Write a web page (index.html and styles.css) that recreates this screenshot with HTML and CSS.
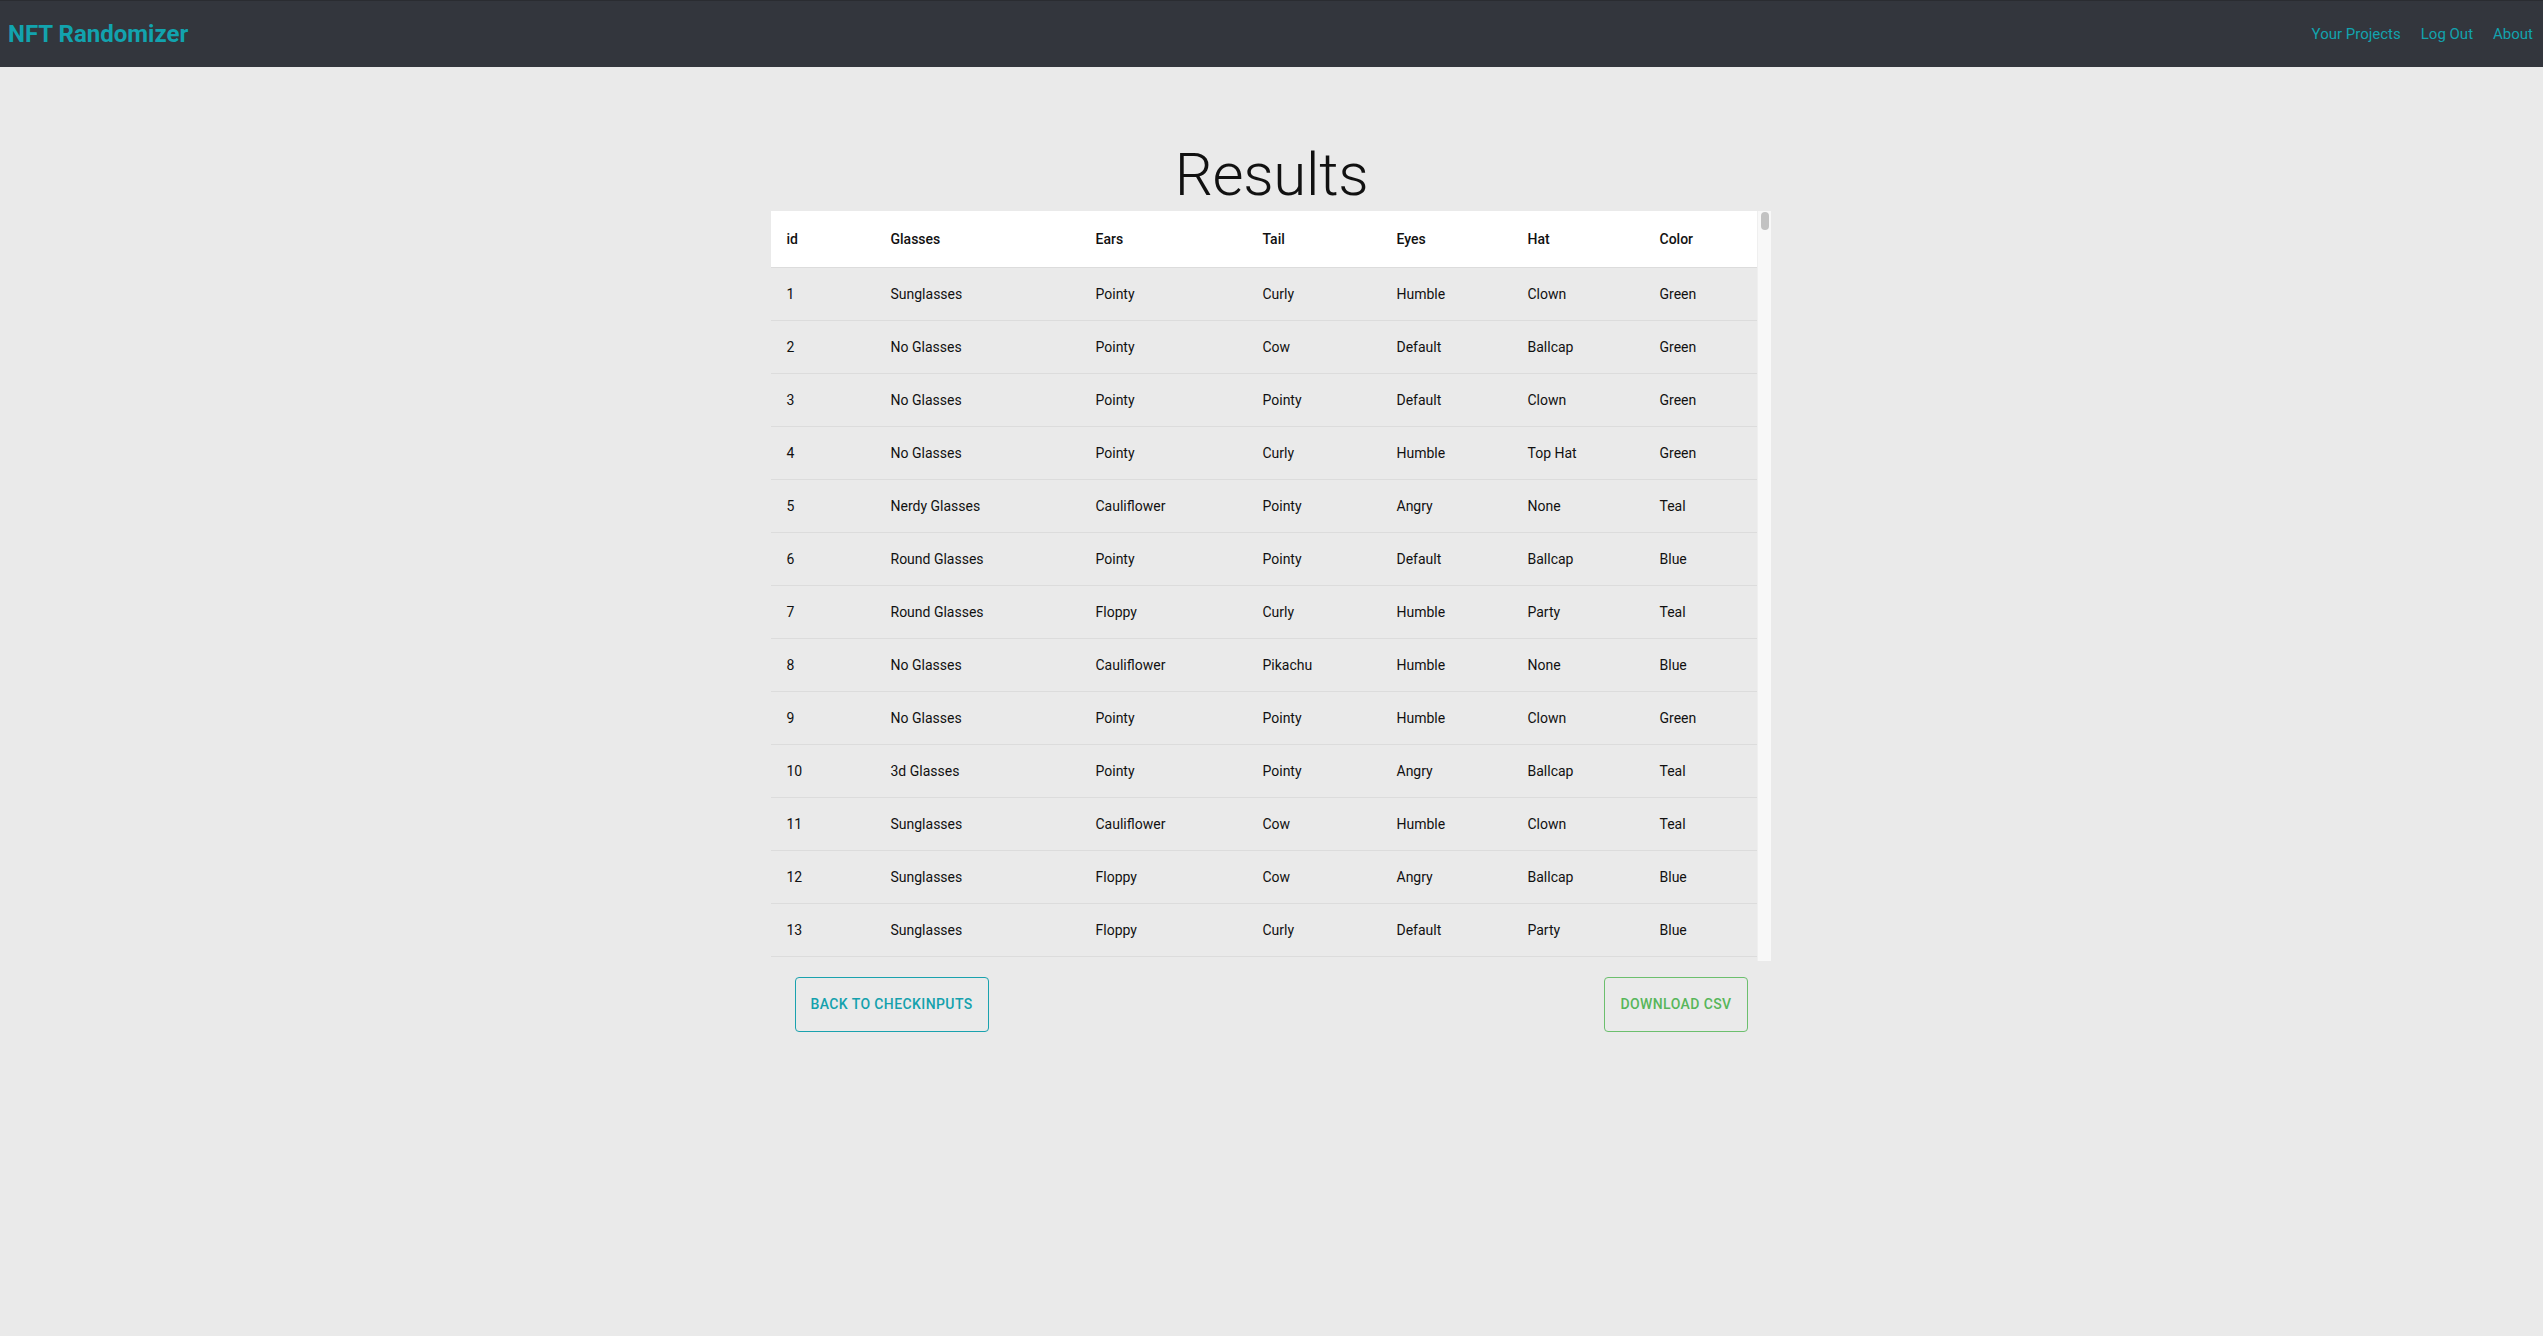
FILE: index.html
```html
<!DOCTYPE html>
<html lang="en">
<head>
<meta charset="utf-8">
<title>NFT Randomizer - Results</title>
<link rel="stylesheet" href="styles.css">
</head>
<body>
<header class="navbar">
  <a class="brand" href="#">NFT Randomizer</a>
  <nav class="nav-links">
    <a href="#">Your Projects</a>
    <a href="#">Log Out</a>
    <a href="#">About</a>
  </nav>
</header>
<main class="page">
  <h1 class="title">Results</h1>
  <section class="results">
    <div class="table-box">
      <div class="table-wrap">
        <table class="results-table">
          <colgroup>
            <col class="c-id"><col class="c-glasses"><col class="c-ears"><col class="c-tail"><col class="c-eyes"><col class="c-hat"><col class="c-color">
          </colgroup>
          <thead>
            <tr><th>id</th><th>Glasses</th><th>Ears</th><th>Tail</th><th>Eyes</th><th>Hat</th><th>Color</th></tr>
          </thead>
          <tbody>
            <tr><td>1</td><td>Sunglasses</td><td>Pointy</td><td>Curly</td><td>Humble</td><td>Clown</td><td>Green</td></tr>
            <tr><td>2</td><td>No Glasses</td><td>Pointy</td><td>Cow</td><td>Default</td><td>Ballcap</td><td>Green</td></tr>
            <tr><td>3</td><td>No Glasses</td><td>Pointy</td><td>Pointy</td><td>Default</td><td>Clown</td><td>Green</td></tr>
            <tr><td>4</td><td>No Glasses</td><td>Pointy</td><td>Curly</td><td>Humble</td><td>Top Hat</td><td>Green</td></tr>
            <tr><td>5</td><td>Nerdy Glasses</td><td>Cauliflower</td><td>Pointy</td><td>Angry</td><td>None</td><td>Teal</td></tr>
            <tr><td>6</td><td>Round Glasses</td><td>Pointy</td><td>Pointy</td><td>Default</td><td>Ballcap</td><td>Blue</td></tr>
            <tr><td>7</td><td>Round Glasses</td><td>Floppy</td><td>Curly</td><td>Humble</td><td>Party</td><td>Teal</td></tr>
            <tr><td>8</td><td>No Glasses</td><td>Cauliflower</td><td>Pikachu</td><td>Humble</td><td>None</td><td>Blue</td></tr>
            <tr><td>9</td><td>No Glasses</td><td>Pointy</td><td>Pointy</td><td>Humble</td><td>Clown</td><td>Green</td></tr>
            <tr><td>10</td><td>3d Glasses</td><td>Pointy</td><td>Pointy</td><td>Angry</td><td>Ballcap</td><td>Teal</td></tr>
            <tr><td>11</td><td>Sunglasses</td><td>Cauliflower</td><td>Cow</td><td>Humble</td><td>Clown</td><td>Teal</td></tr>
            <tr><td>12</td><td>Sunglasses</td><td>Floppy</td><td>Cow</td><td>Angry</td><td>Ballcap</td><td>Blue</td></tr>
            <tr><td>13</td><td>Sunglasses</td><td>Floppy</td><td>Curly</td><td>Default</td><td>Party</td><td>Blue</td></tr>
          </tbody>
        </table>
      </div>
      <div class="scrollbar" aria-hidden="true"><div class="scroll-thumb"></div></div>
    </div>
    <div class="actions">
      <button class="btn btn-teal" type="button">Back to Checkinputs</button>
      <button class="btn btn-green" type="button">Download CSV</button>
    </div>
  </section>
</main>
</body>
</html>
```

FILE: styles.css
```css
* { box-sizing: border-box; }

html, body {
  margin: 0;
  padding: 0;
}

body {
  min-height: 100vh;
  background: #eaeaea;
  font-family: Roboto, "Liberation Sans", Arial, sans-serif;
  color: #111;
}

.navbar {
  height: 67px;
  background: #33363d;
  border-top: 1px solid #2a2c31;
  display: flex;
  align-items: center;
  justify-content: space-between;
  padding: 0 10px 0 8px;
}

.brand {
  color: #12a3ae;
  font-weight: 700;
  font-size: 24px;
  text-decoration: none;
  line-height: 1;
}

.nav-links {
  display: flex;
  gap: 20px;
}

.nav-links a {
  color: #12a3ae;
  text-decoration: none;
  font-size: 15px;
  line-height: 1;
}

.page {
  padding-top: 72px;
}

.title {
  margin: 0;
  text-align: center;
  font-weight: 300;
  font-size: 60px;
  line-height: 72px;
  color: #111;
  letter-spacing: -0.3px;
}

.results {
  width: 1000px;
  margin-left: calc(50% - 501px);
}

.table-box {
  display: flex;
  height: 750px;
}

.table-wrap {
  flex: 1;
  overflow: hidden;
}

.scrollbar {
  width: 14px;
  flex: none;
  background: #f8f8f8;
  border-left: 1px solid #efefef;
  padding: 1px 2px 0 3px;
}

.scroll-thumb {
  height: 18px;
  border-radius: 5px;
  background: #c2c2c2;
}

.results-table {
  width: 100%;
  border-collapse: collapse;
  table-layout: fixed;
  font-size: 14px;
}

.c-id { width: 104px; }
.c-glasses { width: 205px; }
.c-ears { width: 167px; }
.c-tail { width: 134px; }
.c-eyes { width: 131px; }
.c-hat { width: 132px; }
.c-color { width: 113px; }

.results-table th,
.results-table td {
  text-align: left;
  padding: 16px;
  border-bottom: 1px solid #dcdcdc;
  white-space: nowrap;
}

.results-table th {
  background: #fff;
  font-weight: 500;
  line-height: 24px;
  color: #111;
}

.results-table td {
  font-weight: 400;
  line-height: 20.02px;
}

.actions {
  display: flex;
  justify-content: space-between;
  padding: 16px 23px 0 24px;
}

.btn {
  font-family: Roboto, "Liberation Sans", Arial, sans-serif;
  font-size: 14px;
  font-weight: 500;
  letter-spacing: 0.4px;
  text-transform: uppercase;
  line-height: 24.5px;
  padding: 14px 15px;
  background: transparent;
  border-radius: 4px;
  cursor: pointer;
}

.btn-teal {
  color: #14a1ad;
  border: 1px solid #1aa2ae;
}

.btn-green {
  color: #57b65a;
  border: 1px solid #6cbf6e;
}
```
